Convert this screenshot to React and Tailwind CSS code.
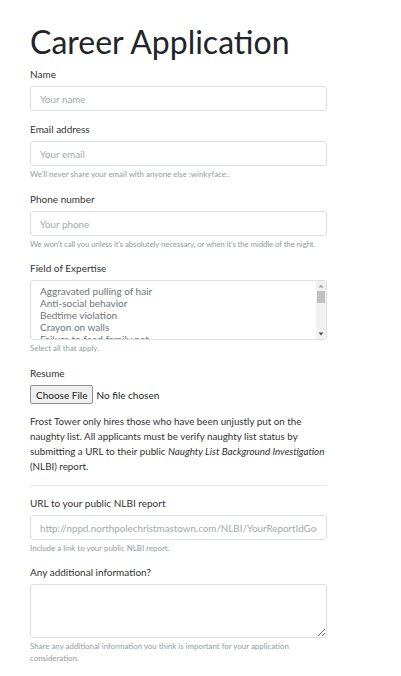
import { useState } from 'react';

const fieldClass =
  'block w-full h-[25px] px-[9px] text-[9.8px] text-[#495057] bg-white border border-[#dcdfe3] rounded-[3px] placeholder:text-[#a3a9ae] outline-none';

const Label = ({ children, htmlFor }) => (
  <label htmlFor={htmlFor} className="block text-[10px] leading-[14px] mb-[5px] text-[#333]">
    {children}
  </label>
);

const Help = ({ children, className = '' }) => (
  <p className={`mt-[2px] text-[7.9px] leading-[12px] text-[#939ba2] ${className}`}>{children}</p>
);

const App = () => {
  const [form, setForm] = useState({ name: '', email: '', phone: '', url: '', info: '' });

  const handleChange = (e) => {
    const { name, value } = e.target;
    setForm(prev => ({ ...prev, [name]: value }));
  };

  const expertise = [
    'Aggravated pulling of hair',
    'Anti-social behavior',
    'Bedtime violation',
    'Crayon on walls',
    'Failure to feed family pet',
    'Holiday rudeness',
  ];

  return (
    <div className="min-h-screen bg-white" style={{ fontFamily: 'Lato, "Open Sans", sans-serif' }}>
      <form className="ml-[30px] w-[297px] pt-[22px] pb-6">
        <h1 className="text-[32px] leading-[40px] text-[#212529] mb-[5px]">Career Application</h1>

        {/* Name */}
        <div className="mb-[11px]">
          <Label htmlFor="name">Name</Label>
          <input id="name" name="name" type="text" placeholder="Your name" value={form.name} onChange={handleChange} className={fieldClass} />
        </div>

        {/* Email */}
        <div className="mb-[12px]">
          <Label htmlFor="email">Email address</Label>
          <input id="email" name="email" type="email" placeholder="Your email" value={form.email} onChange={handleChange} className={fieldClass} />
          <Help>We'll never share your email with anyone else :winkyface:.</Help>
        </div>

        {/* Phone */}
        <div className="mb-[11px]">
          <Label htmlFor="phone">Phone number</Label>
          <input id="phone" name="phone" type="tel" placeholder="Your phone" value={form.phone} onChange={handleChange} className={fieldClass} />
          <Help className="whitespace-nowrap tracking-[-0.12px]">We won't call you unless it's absolutely necessary, or when it's the middle of the night.</Help>
        </div>

        {/* Field of Expertise */}
        <div className="mb-[12px]">
          <Label htmlFor="expertise">Field of Expertise</Label>
          <div className="relative">
            <select
              id="expertise"
              multiple
              className="block w-full h-[60px] pl-[9px] pr-[12px] pt-[4px] text-[10px] text-[#6c757d] bg-white border border-[#dcdfe3] rounded-[3px] outline-none overflow-hidden"
            >
              {expertise.map((item) => (
                <option key={item} value={item} className="leading-[12.4px]">{item}</option>
              ))}
            </select>
            {/* scrollbar */}
            <div className="absolute right-[1px] top-[1px] bottom-[1px] w-[10px] bg-[#f1f1f1] flex flex-col items-center">
              <svg width="10" height="10" viewBox="0 0 10 10" className="shrink-0">
                <path d="M5 3.5 L7.5 6.5 L2.5 6.5 Z" fill="#a3a3a3" />
              </svg>
              <div className="w-[8px] h-[12px] bg-[#c1c1c1]" />
              <div className="flex-1" />
              <svg width="10" height="10" viewBox="0 0 10 10" className="shrink-0">
                <path d="M2.5 3.5 L7.5 3.5 L5 6.5 Z" fill="#505050" />
              </svg>
            </div>
          </div>
          <Help>Select all that apply.</Help>
        </div>

        {/* Resume */}
        <div className="mb-[10px]">
          <Label htmlFor="resume">Resume</Label>
          <input
            id="resume"
            type="file"
            className="block text-[10px] leading-[18px] text-[#212529] file:h-[19px] file:px-[5px] file:mr-[3px] file:border file:border-[#8f8f8f] file:rounded-[2px] file:bg-[#efefef] file:text-[#222]"
          />
        </div>

        <p className="text-[9.8px] leading-[15px] text-[#333]">
          Frost Tower only hires those who have been unjustly put on the naughty list. All applicants must be verify naughty list status by submitting a URL to their public <em>Naughty List Background Investigation</em> (NLBI) report.
        </p>

        <hr className="mt-[11px] mb-[10px] border-t border-[#e6e6e6]" />

        {/* URL */}
        <div className="mb-[11px]">
          <Label htmlFor="url">URL to your public NLBI report</Label>
          <input id="url" name="url" type="url" placeholder="http://nppd.northpolechristmastown.com/NLBI/YourReportIdGoesHere" value={form.url} onChange={handleChange} className={fieldClass} />
          <Help>Include a link to your public NLBI report.</Help>
        </div>

        {/* Additional info */}
        <div>
          <Label htmlFor="info">Any additional information?</Label>
          <textarea id="info" name="info" rows="3" value={form.info} onChange={handleChange} className="block w-full h-[54px] px-[9px] py-[4px] text-[10px] text-[#495057] bg-white border border-[#dcdfe3] rounded-[3px] outline-none" />
          <Help>Share any additional information you think is important for your application consideration.</Help>
        </div>
      </form>
    </div>
  );
};

export default App;
